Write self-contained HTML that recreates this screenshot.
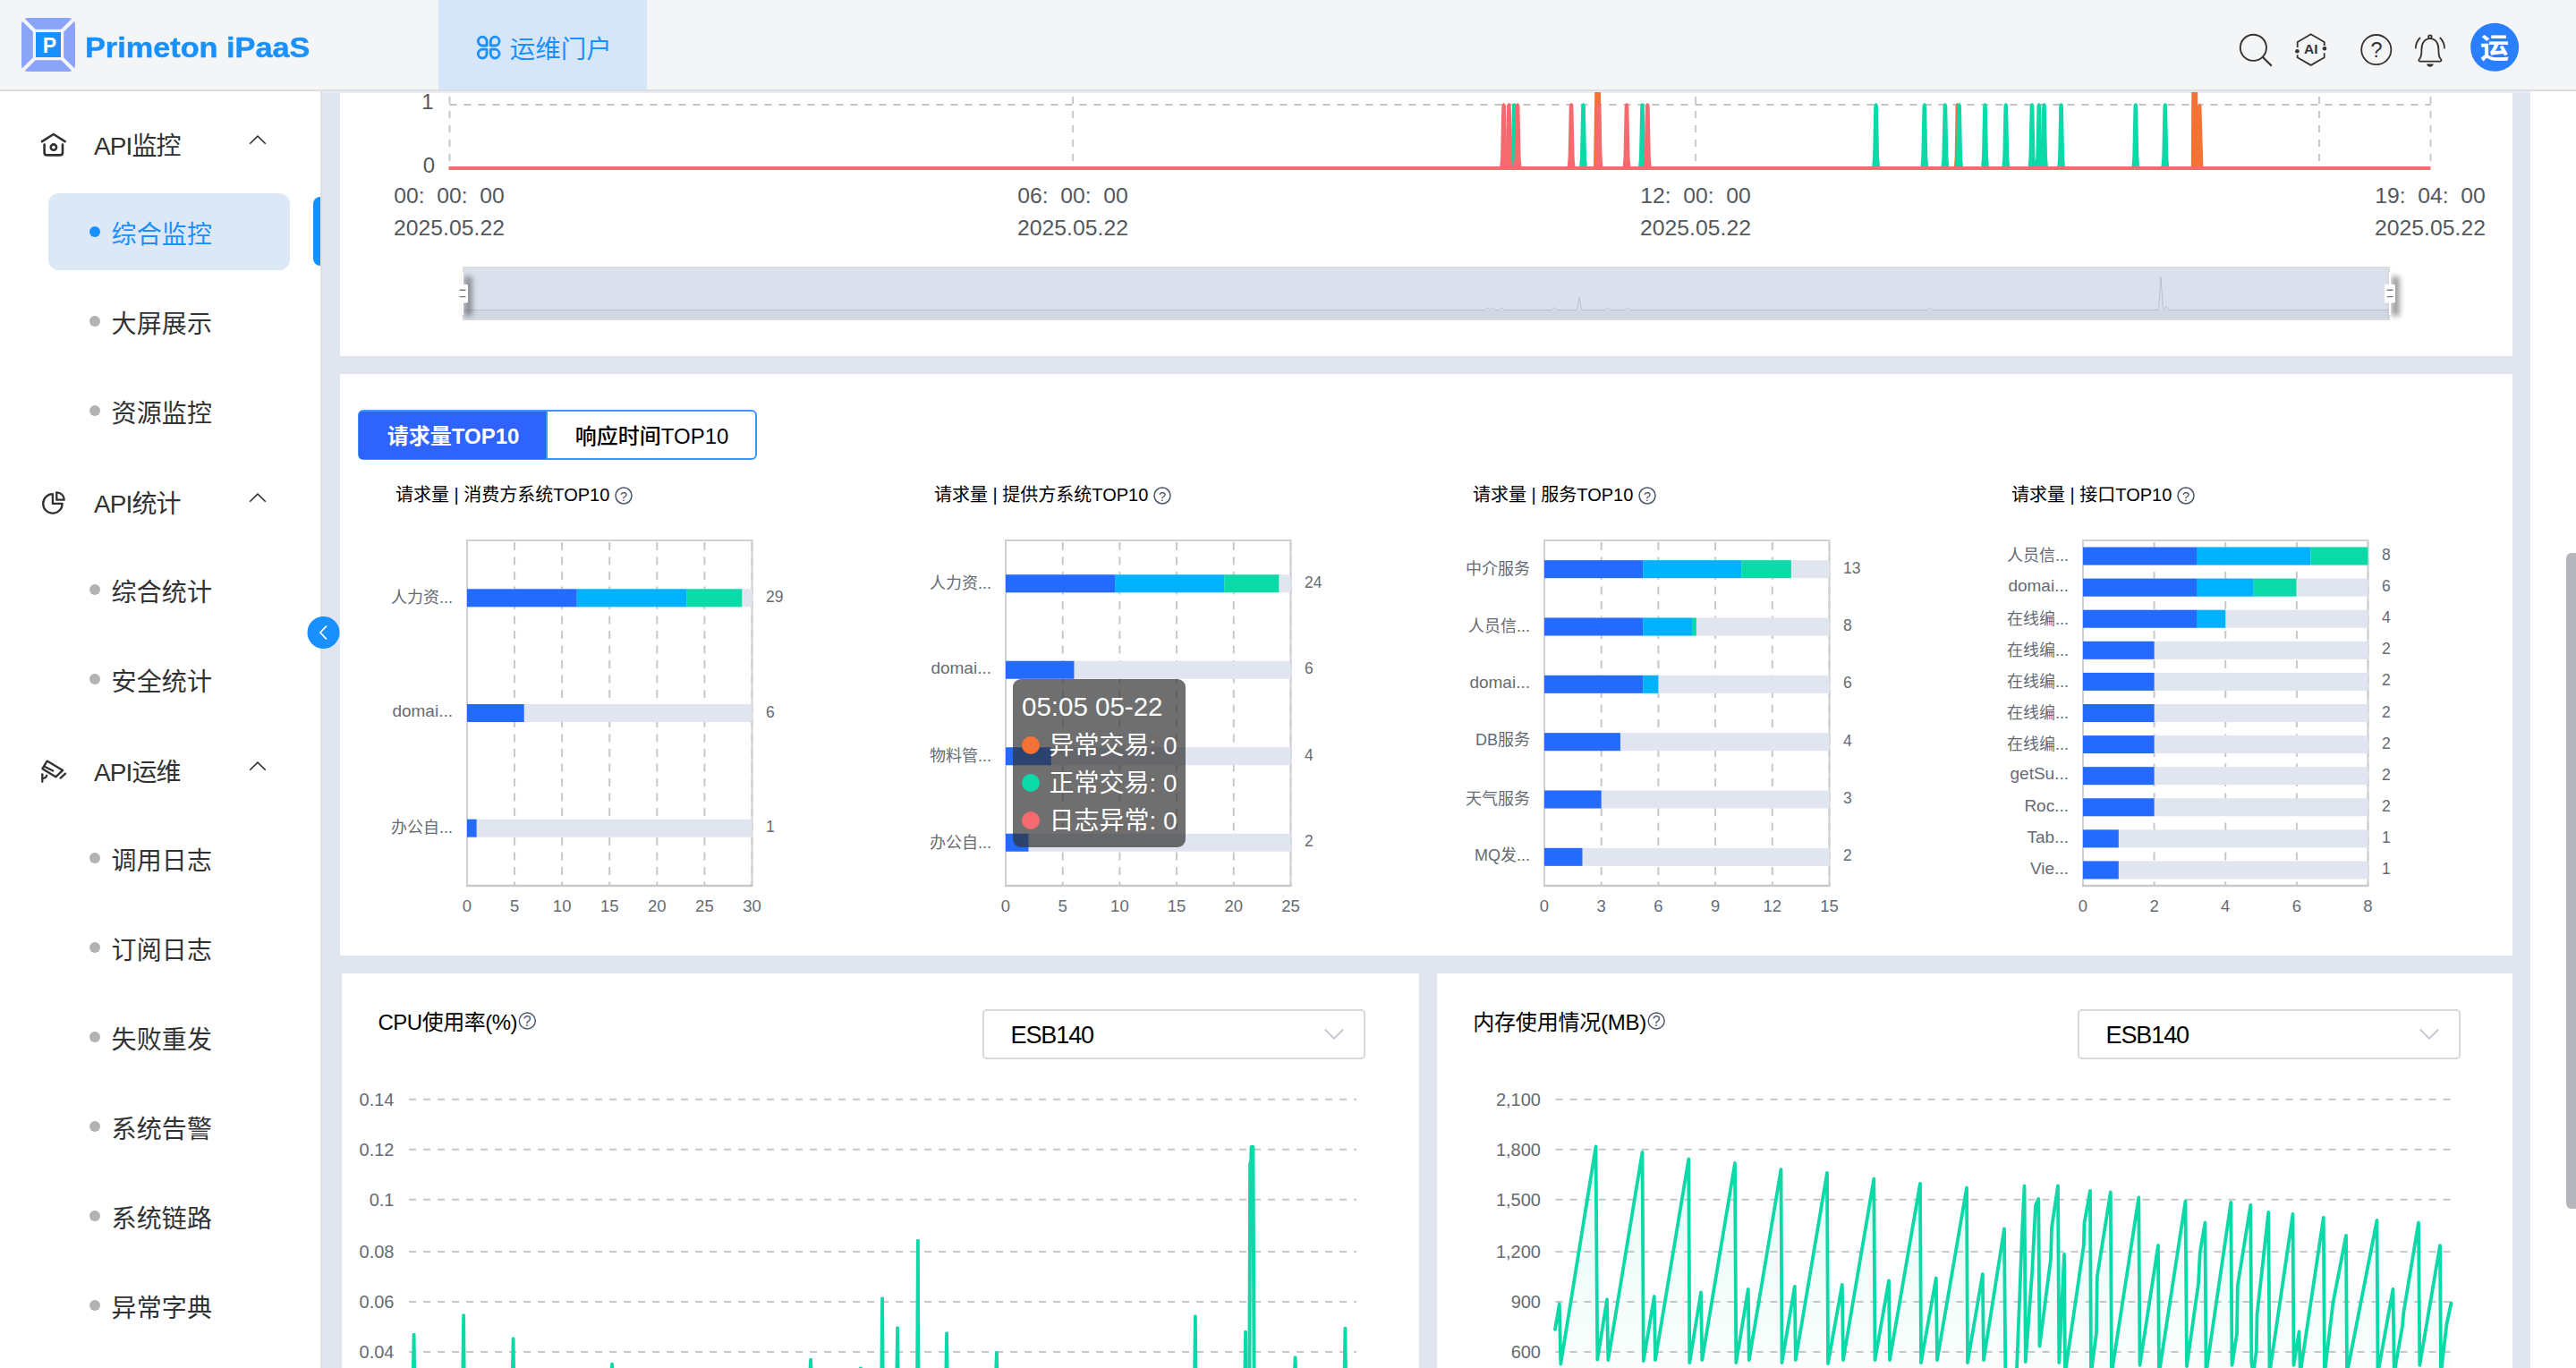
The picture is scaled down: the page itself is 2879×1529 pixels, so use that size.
<!DOCTYPE html>
<html lang="zh-CN">
<head>
<meta charset="utf-8">
<title>Primeton iPaaS - 综合监控</title>
<style>
html,body{margin:0;padding:0;}
body{width:2879px;height:1529px;overflow:hidden;position:relative;background:#fff;font-family:"Liberation Sans", "Noto Sans CJK SC", sans-serif;}
.b{position:absolute;z-index:0;}
.t{position:absolute;white-space:nowrap;z-index:3;}
svg.l{position:absolute;left:0;top:0;pointer-events:none;}
svg.l1{z-index:1;}
svg.l2{z-index:2;}
.tb{z-index:4;}
.tt{z-index:5;}
</style>
</head>
<body>
<div class="app-shell" aria-label="页面框架">
<div class="b" style="left:0px;top:0px;width:2879px;height:1529px;background:#ffffff;"></div>
<div class="b" style="left:358px;top:102px;width:2470px;height:1427px;background:#e1e5ef;"></div>
<div class="b" style="left:358px;top:102px;width:2px;height:1427px;background:#e0e0e1;"></div>
<div class="b" style="left:0px;top:0px;width:2879px;height:100px;background:#f4f5f7;"></div>
<div class="b" style="left:0px;top:100px;width:2879px;height:2px;background:linear-gradient(180deg,#e6e6e7,#d8d8d9 55%,#e2e3e6);"></div>
<div class="b" style="left:360px;top:102px;width:2468px;height:2px;background:#eaedf5;"></div>
<div class="b" style="left:490px;top:0px;width:233px;height:100px;background:#d6e5f7;"></div>
<div class="b" style="left:380px;top:104px;width:2428px;height:294px;background:#fff;"></div>
<div class="b" style="left:380px;top:418px;width:2428px;height:650px;background:#fff;"></div>
<div class="b" style="left:382px;top:1088px;width:1204px;height:441px;background:#fff;"></div>
<div class="b" style="left:1606px;top:1088px;width:1202px;height:441px;background:#fff;"></div>
<div class="b" style="left:2868px;top:618px;width:11px;height:733px;background:#b5b6bb;border-radius:6px 0 0 6px;"></div>
</div>
<header class="app-header" aria-label="顶部导航">
<svg class="l l1" width="2879" height="1529" viewBox="0 0 2879 1529" aria-hidden="true">
<g transform="translate(24,20)">
<rect x="0" y="0" width="60" height="60" rx="7" fill="#8aa4f8"/>
<path d="M-2 -2 L62 62 M62 -2 L-2 62" stroke="#f4f5f7" stroke-width="3.9"/>
<rect x="12.8" y="12.8" width="34.4" height="34.4" fill="#f4f5f7"/>
<rect x="16" y="16" width="28" height="28" fill="#1890ff"/>
</g>
<path d="M539.2,41.2 L539.2,41.2 A4.9,4.9 0 0 1 544.1,46.1 L544.1,50.4 A0.6,0.6 0 0 1 543.5,51.0 L539.2,51.0 A4.9,4.9 0 0 1 534.3000000000001,46.1 L534.3000000000001,46.1 A4.9,4.9 0 0 1 539.2,41.2 Z" fill="none" stroke="#1890ff" stroke-width="2.8"/><path d="M553.2,41.2 L553.2,41.2 A4.9,4.9 0 0 1 558.1,46.1 L558.1,46.1 A4.9,4.9 0 0 1 553.2,51.0 L548.9000000000001,51.0 A0.6,0.6 0 0 1 548.3000000000001,50.4 L548.3000000000001,46.1 A4.9,4.9 0 0 1 553.2,41.2 Z" fill="none" stroke="#1890ff" stroke-width="2.8"/><path d="M539.2,55.2 L543.5,55.2 A0.6,0.6 0 0 1 544.1,55.800000000000004 L544.1,60.1 A4.9,4.9 0 0 1 539.2,65.0 L539.2,65.0 A4.9,4.9 0 0 1 534.3000000000001,60.1 L534.3000000000001,60.1 A4.9,4.9 0 0 1 539.2,55.2 Z" fill="none" stroke="#1890ff" stroke-width="2.8"/><path d="M548.9000000000001,55.2 L553.2,55.2 A4.9,4.9 0 0 1 558.1,60.1 L558.1,60.1 A4.9,4.9 0 0 1 553.2,65.0 L553.2,65.0 A4.9,4.9 0 0 1 548.3000000000001,60.1 L548.3000000000001,55.800000000000004 A0.6,0.6 0 0 1 548.9000000000001,55.2 Z" fill="none" stroke="#1890ff" stroke-width="2.8"/>
<circle cx="2518.4" cy="53.3" r="14.6" fill="none" stroke="#333" stroke-width="1.9"/><path d="M2529 64 L2538.2 73" stroke="#333" stroke-width="2.2" stroke-linecap="round"/>
<path d="M2567.7,53.0 L2567.7,47.0 L2582.7,38.3 L2597.7,47.0 L2597.7,51.0 M2597.7,59.2 L2597.7,64.2 L2582.7,72.9 L2567.7,64.3 L2567.7,61.3" fill="none" stroke="#333" stroke-width="1.8" stroke-linejoin="round"/><circle cx="2567.4" cy="57.2" r="2.3" fill="#333"/><circle cx="2598" cy="54.2" r="2.3" fill="#333"/>
<circle cx="2655.8" cy="55.6" r="16.6" fill="none" stroke="#333" stroke-width="1.8"/>
<g fill="none" stroke="#333" stroke-width="1.8" stroke-linecap="round" stroke-linejoin="round">
<path d="M2704.5,68.6 C2703.5,68.6 2702.8,67.2 2703.8,66.2 C2706.6,63.6 2706.4,60 2706.4,55 C2706.4,48 2710,43.2 2715.9,43.2 C2721.8,43.2 2725.4,48 2725.4,55 C2725.4,60 2725.2,63.6 2728,66.2 C2729,67.2 2728.3,68.6 2727.3,68.6 Z"/>
<circle cx="2715.9" cy="41.2" r="1.8"/>
<path d="M2704.5,42.5 C2701.5,45.5 2700,49.5 2699.8,53.5"/>
<path d="M2727.3,42.5 C2730.3,45.5 2731.8,49.5 2732,53.5"/>
</g><path d="M2712,71.6 L2719.8,71.6 C2719.2,73.8 2717.6,74.8 2715.9,74.8 C2714.2,74.8 2712.6,73.8 2712,71.6 Z" fill="#333"/>
<circle cx="2788.1" cy="52.8" r="27" fill="#2a7fff"/>
</svg>
<div class="t" style="top:35.30px;font-size:23px;line-height:32px;color:#fff;font-weight:700;left:-344.50px;width:800px;text-align:center;">P</div>
<div class="t" style="top:31.60px;font-size:31.3px;line-height:44px;color:#1890ff;font-weight:700;left:95.40px;transform:scaleX(1.095);transform-origin:0 50%;-webkit-text-stroke:0.45px #1890ff;">Primeton iPaaS</div>
<div class="t" style="top:35.00px;font-size:28.5px;line-height:40px;color:#1890ff;left:569.80px;">运维门户</div>
<div class="t" style="top:44.20px;font-size:15.5px;line-height:22px;color:#333;font-weight:700;left:2182.80px;width:800px;text-align:center;">AI</div>
<div class="t" style="top:39.70px;font-size:23.5px;line-height:33px;color:#333;left:2256.00px;width:800px;text-align:center;">?</div>
<div class="t" style="top:32.00px;font-size:32px;line-height:45px;color:#fff;font-weight:700;left:2388.10px;width:800px;text-align:center;">运</div>
</header>
<nav class="app-sidebar" aria-label="侧边菜单">
<div class="b" style="left:54px;top:216px;width:270px;height:86px;background:#dde8f6;border-radius:12px;"></div>
<div class="b" style="left:350px;top:220px;width:8px;height:77px;background:#1890ff;border-radius:8px 0 0 8px;"></div>
<svg class="l l1" width="2879" height="1529" viewBox="0 0 2879 1529" aria-hidden="true">
<path d="M279.2,160.8 L288,152.2 L296.8,160.8" fill="none" stroke="#303133" stroke-width="1.6"/>
<path d="M279.2,560.8 L288,552.2 L296.8,560.8" fill="none" stroke="#303133" stroke-width="1.6"/>
<path d="M279.2,860.8 L288,852.2 L296.8,860.8" fill="none" stroke="#303133" stroke-width="1.6"/>
<g fill="none" stroke="#303133" stroke-width="2.6" stroke-linecap="round" stroke-linejoin="round">
<path d="M47,158.2 L59.8,150 L72.6,158.2"/>
<path d="M49.6,161.5 L49.6,170.4 Q49.6,173.4 52.6,173.4 L67,173.4 Q70,173.4 70,170.4 L70,161.5"/>
<circle cx="59.9" cy="164.6" r="3.2"/></g>
<g fill="none" stroke="#303133" stroke-width="2.3" stroke-linejoin="round">
<path d="M58.9,552.2 A10.7,10.7 0 1 0 69.6,562.9 L58.9,562.9 Z"/>
<path d="M63.3,550.3 L63.3,558.7 L71.7,558.7 A8.4,8.4 0 0 0 63.3,550.3 Z"/></g>
<g fill="none" stroke="#303133" stroke-width="2.3" stroke-linejoin="round" stroke-linecap="round">
<path d="M52.6,850.6 L70.2,860.9 L62.3,868.3 L47.4,859.2 Z"/>
<path d="M50.2,857 L59.2,861.6"/>
<path d="M67.6,869.6 L73,864.6"/>
<path d="M47.3,865.3 L47.3,873.8"/>
<path d="M47.3,870 Q51.6,870 52.2,866.6"/></g>
<circle cx="106" cy="259.0" r="6" fill="#1890ff"/>
<circle cx="106" cy="359.0" r="6" fill="#b2b2b2"/>
<circle cx="106" cy="459.0" r="6" fill="#b2b2b2"/>
<circle cx="106" cy="659.0" r="6" fill="#b2b2b2"/>
<circle cx="106" cy="759.0" r="6" fill="#b2b2b2"/>
<circle cx="106" cy="959.0" r="6" fill="#b2b2b2"/>
<circle cx="106" cy="1059.0" r="6" fill="#b2b2b2"/>
<circle cx="106" cy="1159.0" r="6" fill="#b2b2b2"/>
<circle cx="106" cy="1259.0" r="6" fill="#b2b2b2"/>
<circle cx="106" cy="1359.0" r="6" fill="#b2b2b2"/>
<circle cx="106" cy="1459.0" r="6" fill="#b2b2b2"/>
</svg>
<svg class="l l2" width="2879" height="1529" viewBox="0 0 2879 1529" aria-hidden="true">
<circle cx="361.5" cy="707" r="18" fill="#1890ff"/><path d="M365,699.5 L358,707 L365,714.5" fill="none" stroke="#fff" stroke-width="1.8"/>
</svg>
<div class="t" style="top:143.70px;font-size:28px;line-height:39px;color:#303133;letter-spacing:-0.9px;left:105.00px;">API监控</div>
<div class="t" style="top:543.70px;font-size:28px;line-height:39px;color:#303133;letter-spacing:-0.9px;left:105.00px;">API统计</div>
<div class="t" style="top:843.70px;font-size:28px;line-height:39px;color:#303133;letter-spacing:-0.9px;left:105.00px;">API运维</div>
<div class="t" style="top:243.40px;font-size:28px;line-height:39px;color:#1890ff;letter-spacing:0.15px;left:124.50px;">综合监控</div>
<div class="t" style="top:343.40px;font-size:28px;line-height:39px;color:#303133;letter-spacing:0.15px;left:124.50px;">大屏展示</div>
<div class="t" style="top:443.40px;font-size:28px;line-height:39px;color:#303133;letter-spacing:0.15px;left:124.50px;">资源监控</div>
<div class="t" style="top:643.40px;font-size:28px;line-height:39px;color:#303133;letter-spacing:0.15px;left:124.50px;">综合统计</div>
<div class="t" style="top:743.40px;font-size:28px;line-height:39px;color:#303133;letter-spacing:0.15px;left:124.50px;">安全统计</div>
<div class="t" style="top:943.40px;font-size:28px;line-height:39px;color:#303133;letter-spacing:0.15px;left:124.50px;">调用日志</div>
<div class="t" style="top:1043.40px;font-size:28px;line-height:39px;color:#303133;letter-spacing:0.15px;left:124.50px;">订阅日志</div>
<div class="t" style="top:1143.40px;font-size:28px;line-height:39px;color:#303133;letter-spacing:0.15px;left:124.50px;">失败重发</div>
<div class="t" style="top:1243.40px;font-size:28px;line-height:39px;color:#303133;letter-spacing:0.15px;left:124.50px;">系统告警</div>
<div class="t" style="top:1343.40px;font-size:28px;line-height:39px;color:#303133;letter-spacing:0.15px;left:124.50px;">系统链路</div>
<div class="t" style="top:1443.40px;font-size:28px;line-height:39px;color:#303133;letter-spacing:0.15px;left:124.50px;">异常字典</div>
</nav>
<main class="app-main">
<section class="card card-trend" aria-label="交易趋势">
<svg class="l l1" width="2879" height="1529" viewBox="0 0 2879 1529" aria-hidden="true">
<g stroke="#c4c4c4" stroke-width="1.8" stroke-dasharray="8 8" fill="none"><path d="M502.5,117 L2716.5,117"/><path d="M502.5,108 L502.5,184"/><path d="M1199,108 L1199,184"/><path d="M1895,108 L1895,184"/><path d="M2592,108 L2592,184"/><path d="M2716.5,108 L2716.5,184"/></g>
<path d="M1781,188 L1782.3,103 L1788.9,103 L1790.5,188 Z" fill="#f57235"/><path d="M2183.7000000000003,188 L2184.7000000000003,176 L2185.55,117.6 Q2187.3,112.4 2189.05,117.6 L2189.9,176 L2190.9,188 Z" fill="#f57235"/><path d="M2448.8,188 L2449.3,103 L2456.1,103 L2456.4,118.5 Q2458.9,113 2460.4,118.5 L2462.4,188 Z" fill="#f57235"/><path d="M1687.7,188 L1688.7,176 L1689.9,117.6 Q1692.2,112.4 1694.5,117.6 L1695.7,176 L1696.7,188 Z" fill="#0bd9a7"/><path d="M1765.0,188 L1766.0,176 L1767.2,117.6 Q1769.5,112.4 1771.8,117.6 L1773.0,176 L1774.0,188 Z" fill="#0bd9a7"/><path d="M1831.0,188 L1832.0,176 L1833.2,117.6 Q1835.5,112.4 1837.8,117.6 L1839.0,176 L1840.0,188 Z" fill="#0bd9a7"/><path d="M2092.1,188 L2093.1,176 L2094.2999999999997,117.6 Q2096.6,112.4 2098.9,117.6 L2100.1,176 L2101.1,188 Z" fill="#0bd9a7"/><path d="M2146.3,188 L2147.3,176 L2148.5,117.6 Q2150.8,112.4 2153.1000000000004,117.6 L2154.3,176 L2155.3,188 Z" fill="#0bd9a7"/><path d="M2169.4,188 L2170.4,176 L2171.6,117.6 Q2173.9,112.4 2176.2000000000003,117.6 L2177.4,176 L2178.4,188 Z" fill="#0bd9a7"/><path d="M2185.1,188 L2186.1,176 L2187.2999999999997,117.6 Q2189.6,112.4 2191.9,117.6 L2193.1,176 L2194.1,188 Z" fill="#0bd9a7"/><path d="M2214.0,188 L2215.0,176 L2216.2,117.6 Q2218.5,112.4 2220.8,117.6 L2222.0,176 L2223.0,188 Z" fill="#0bd9a7"/><path d="M2237.3,188 L2238.3,176 L2239.5,117.6 Q2241.8,112.4 2244.1000000000004,117.6 L2245.3,176 L2246.3,188 Z" fill="#0bd9a7"/><path d="M2266.5,188 L2267.5,176 L2268.7,117.6 Q2271,112.4 2273.3,117.6 L2274.5,176 L2275.5,188 Z" fill="#0bd9a7"/><path d="M2274.3,188 L2275.3,176 L2276.5,117.6 Q2278.8,112.4 2281.1000000000004,117.6 L2282.3,176 L2283.3,188 Z" fill="#0bd9a7"/><path d="M2280.0,188 L2281.0,176 L2282.2,117.6 Q2284.5,112.4 2286.8,117.6 L2288.0,176 L2289.0,188 Z" fill="#0bd9a7"/><path d="M2299.1,188 L2300.1,176 L2301.2999999999997,117.6 Q2303.6,112.4 2305.9,117.6 L2307.1,176 L2308.1,188 Z" fill="#0bd9a7"/><path d="M2382.3,188 L2383.3,176 L2384.5,117.6 Q2386.8,112.4 2389.1000000000004,117.6 L2390.3,176 L2391.3,188 Z" fill="#0bd9a7"/><path d="M2415.3,188 L2416.3,176 L2417.5,117.6 Q2419.8,112.4 2422.1000000000004,117.6 L2423.3,176 L2424.3,188 Z" fill="#0bd9a7"/><path d="M1676.1,188 L1677.1,176 L1678.3,117.6 Q1680.6,112.4 1682.8999999999999,117.6 L1684.1,176 L1685.1,188 Z" fill="#f46a6e"/><path d="M1681.9,188 L1682.9,176 L1684.1000000000001,117.6 Q1686.4,112.4 1688.7,117.6 L1689.9,176 L1690.9,188 Z" fill="#f46a6e"/><path d="M1691.6,188 L1692.6,176 L1693.8,117.6 Q1696.1,112.4 1698.3999999999999,117.6 L1699.6,176 L1700.6,188 Z" fill="#f46a6e"/><path d="M1751.6,188 L1752.6,176 L1753.8,117.6 Q1756.1,112.4 1758.3999999999999,117.6 L1759.6,176 L1760.6,188 Z" fill="#f46a6e"/><path d="M1782.5,188 L1783.5,176 L1784.7,117.6 Q1787,112.4 1789.3,117.6 L1790.5,176 L1791.5,188 Z" fill="#f46a6e"/><path d="M1813.5,188 L1814.5,176 L1815.7,117.6 Q1818,112.4 1820.3,117.6 L1821.5,176 L1822.5,188 Z" fill="#f46a6e"/><path d="M1836.8,188 L1837.8,176 L1839.0,117.6 Q1841.3,112.4 1843.6,117.6 L1844.8,176 L1845.8,188 Z" fill="#f46a6e"/>
<path d="M501.5,188 L2716.5,188" stroke="#f46a6e" stroke-width="4"/>
<rect x="517.8" y="298.8" width="2152.4" height="58.4" fill="#dbe1ec" stroke="#dbdbdb" stroke-width="1.6"/><rect x="518.6" y="346.5" width="2150.8" height="9.9" fill="#d1d8e4"/>
<path d="M517,346.5 L1659.5,346.5 L1662,343.5 L1664.5,346.5 L1665.5,346.5 L1668,343.5 L1670.5,346.5 L1675.5,346.5 L1678,343.5 L1680.5,346.5 L1734.5,346.5 L1737,343.5 L1739.5,346.5 L1762.5,346.5 L1765,332.5 L1767.5,346.5 L1794.5,346.5 L1797,343.5 L1799.5,346.5 L1816.5,346.5 L1819,343.5 L1821.5,346.5 L2154.5,346.5 L2157,343.5 L2159.5,346.5 L2412.5,346.5 L2415,309.5 L2417.5,346.5 L2418.5,346.5 L2421,342.5 L2423.5,346.5 L2671,346.5" fill="none" stroke="#b9c1d0" stroke-width="1"/>
<defs><filter id="hs" x="-200%" y="-50%" width="500%" height="200%"><feGaussianBlur stdDeviation="3"/></filter></defs>
<rect x="519" y="309" width="8.5" height="44" fill="#3c3c40" opacity="0.55" filter="url(#hs)"/>
<rect x="518" y="304" width="18" height="50" fill="#6b7280" opacity="0.0"/><path d="M517,304 L517,352" stroke="#fff" stroke-width="2.2"/><rect x="511" y="317.8" width="12" height="20.6" rx="1.5" fill="#fff"/><path d="M513.6,324.2 L520.4,324.2 M513.6,331.6 L520.4,331.6" stroke="#777b85" stroke-width="1.4"/>
<rect x="2673" y="309" width="8.5" height="44" fill="#3c3c40" opacity="0.55" filter="url(#hs)"/>
<rect x="2672" y="304" width="18" height="50" fill="#6b7280" opacity="0.0"/><path d="M2671,304 L2671,352" stroke="#fff" stroke-width="2.2"/><rect x="2665" y="317.8" width="12" height="20.6" rx="1.5" fill="#fff"/><path d="M2667.6,324.2 L2674.4,324.2 M2667.6,331.6 L2674.4,331.6" stroke="#777b85" stroke-width="1.4"/>
</svg>
<div class="t" style="top:97.00px;font-size:24px;line-height:34px;color:#54575c;right:2394.50px;">1</div>
<div class="t" style="top:168.00px;font-size:24px;line-height:34px;color:#54575c;right:2393.00px;">0</div>
<div class="t" style="top:200.80px;font-size:24.75px;line-height:35px;color:#54575c;word-spacing:6.7px;left:102.00px;width:800px;text-align:center;">00: 00: 00</div>
<div class="t" style="top:236.70px;font-size:24.75px;line-height:35px;color:#54575c;left:102.00px;width:800px;text-align:center;">2025.05.22</div>
<div class="t" style="top:200.80px;font-size:24.75px;line-height:35px;color:#54575c;word-spacing:6.7px;left:799.00px;width:800px;text-align:center;">06: 00: 00</div>
<div class="t" style="top:236.70px;font-size:24.75px;line-height:35px;color:#54575c;left:799.00px;width:800px;text-align:center;">2025.05.22</div>
<div class="t" style="top:200.80px;font-size:24.75px;line-height:35px;color:#54575c;word-spacing:6.7px;left:1495.00px;width:800px;text-align:center;">12: 00: 00</div>
<div class="t" style="top:236.70px;font-size:24.75px;line-height:35px;color:#54575c;left:1495.00px;width:800px;text-align:center;">2025.05.22</div>
<div class="t" style="top:200.80px;font-size:24.75px;line-height:35px;color:#54575c;word-spacing:6.7px;left:2316.00px;width:800px;text-align:center;">19: 04: 00</div>
<div class="t" style="top:236.70px;font-size:24.75px;line-height:35px;color:#54575c;left:2316.00px;width:800px;text-align:center;">2025.05.22</div>
</section>
<section class="card card-top10" aria-label="请求量TOP10">
<div class="b" style="left:399.8px;top:458px;width:446px;height:56px;background:#fff;border:2px solid #3a95ff;border-radius:6px;box-sizing:border-box;"></div>
<div class="b" style="left:401.3px;top:459.5px;width:210.2px;height:53px;background:#2e63fe;border-radius:4px 0 0 4px;"></div>
<div class="b" style="left:610px;top:459.5px;width:2px;height:53px;background:#3a95ff;"></div>
<svg class="l l1" width="2879" height="1529" viewBox="0 0 2879 1529" aria-hidden="true">
<circle cx="697" cy="554" r="9" fill="none" stroke="#4b5366" stroke-width="1.5"/>
<g stroke="#c8c8c8" stroke-width="2" stroke-dasharray="9 7.5" fill="none"><path d="M575.08,606 L575.08,990"/><path d="M628.17,606 L628.17,990"/><path d="M681.25,606 L681.25,990"/><path d="M734.33,606 L734.33,990"/><path d="M787.42,606 L787.42,990"/><path d="M840.50,606 L840.50,990"/></g>
<path d="M522,990 L522,604 L840.5,604 L840.5,990" fill="none" stroke="#cfd0d2" stroke-width="2"/><path d="M521,990 L841.5,990" stroke="#c9c9c9" stroke-width="2.5"/>
<rect x="522" y="658.33" width="318.5" height="20" fill="#e1e5ef"/>
<rect x="522.00" y="658.33" width="122.73" height="20" fill="#246bfd"/>
<rect x="644.73" y="658.33" width="122.94" height="20" fill="#00b2fe"/>
<rect x="767.67" y="658.33" width="61.58" height="20" fill="#0bd9a7"/>
<rect x="522" y="787.00" width="318.5" height="20" fill="#e1e5ef"/>
<rect x="522.00" y="787.00" width="63.70" height="20" fill="#246bfd"/>
<rect x="522" y="915.67" width="318.5" height="20" fill="#e1e5ef"/>
<rect x="522.00" y="915.67" width="10.62" height="20" fill="#246bfd"/>
<circle cx="1299" cy="554" r="9" fill="none" stroke="#4b5366" stroke-width="1.5"/>
<g stroke="#c8c8c8" stroke-width="2" stroke-dasharray="9 7.5" fill="none"><path d="M1187.70,606 L1187.70,990"/><path d="M1251.40,606 L1251.40,990"/><path d="M1315.10,606 L1315.10,990"/><path d="M1378.80,606 L1378.80,990"/><path d="M1442.50,606 L1442.50,990"/></g>
<path d="M1124,990 L1124,604 L1442.5,604 L1442.5,990" fill="none" stroke="#cfd0d2" stroke-width="2"/><path d="M1123,990 L1443.5,990" stroke="#c9c9c9" stroke-width="2.5"/>
<rect x="1124" y="642.25" width="318.5" height="20" fill="#e1e5ef"/>
<rect x="1124.00" y="642.25" width="122.05" height="20" fill="#246bfd"/>
<rect x="1246.05" y="642.25" width="122.30" height="20" fill="#00b2fe"/>
<rect x="1368.35" y="642.25" width="61.02" height="20" fill="#0bd9a7"/>
<rect x="1124" y="738.75" width="318.5" height="20" fill="#e1e5ef"/>
<rect x="1124.00" y="738.75" width="76.44" height="20" fill="#246bfd"/>
<rect x="1124" y="835.25" width="318.5" height="20" fill="#e1e5ef"/>
<rect x="1124.00" y="835.25" width="50.96" height="20" fill="#246bfd"/>
<rect x="1124" y="931.75" width="318.5" height="20" fill="#e1e5ef"/>
<rect x="1124.00" y="931.75" width="25.48" height="20" fill="#246bfd"/>
<circle cx="1841" cy="554" r="9" fill="none" stroke="#4b5366" stroke-width="1.5"/>
<g stroke="#c8c8c8" stroke-width="2" stroke-dasharray="9 7.5" fill="none"><path d="M1789.70,606 L1789.70,990"/><path d="M1853.40,606 L1853.40,990"/><path d="M1917.10,606 L1917.10,990"/><path d="M1980.80,606 L1980.80,990"/><path d="M2044.50,606 L2044.50,990"/></g>
<path d="M1726,990 L1726,604 L2044.5,604 L2044.5,990" fill="none" stroke="#cfd0d2" stroke-width="2"/><path d="M1725,990 L2045.5,990" stroke="#c9c9c9" stroke-width="2.5"/>
<rect x="1726" y="626.17" width="318.5" height="20" fill="#e1e5ef"/>
<rect x="1726.00" y="626.17" width="110.20" height="20" fill="#246bfd"/>
<rect x="1836.20" y="626.17" width="109.99" height="20" fill="#00b2fe"/>
<rect x="1946.19" y="626.17" width="55.63" height="20" fill="#0bd9a7"/>
<rect x="1726" y="690.50" width="318.5" height="20" fill="#e1e5ef"/>
<rect x="1726.00" y="690.50" width="110.20" height="20" fill="#246bfd"/>
<rect x="1836.20" y="690.50" width="54.78" height="20" fill="#00b2fe"/>
<rect x="1890.98" y="690.50" width="4.88" height="20" fill="#0bd9a7"/>
<rect x="1726" y="754.83" width="318.5" height="20" fill="#e1e5ef"/>
<rect x="1726.00" y="754.83" width="110.20" height="20" fill="#246bfd"/>
<rect x="1836.20" y="754.83" width="17.20" height="20" fill="#00b2fe"/>
<rect x="1726" y="819.17" width="318.5" height="20" fill="#e1e5ef"/>
<rect x="1726.00" y="819.17" width="84.93" height="20" fill="#246bfd"/>
<rect x="1726" y="883.50" width="318.5" height="20" fill="#e1e5ef"/>
<rect x="1726.00" y="883.50" width="63.70" height="20" fill="#246bfd"/>
<rect x="1726" y="947.83" width="318.5" height="20" fill="#e1e5ef"/>
<rect x="1726.00" y="947.83" width="42.47" height="20" fill="#246bfd"/>
<circle cx="2443" cy="554" r="9" fill="none" stroke="#4b5366" stroke-width="1.5"/>
<g stroke="#c8c8c8" stroke-width="2" stroke-dasharray="9 7.5" fill="none"><path d="M2407.62,606 L2407.62,990"/><path d="M2487.25,606 L2487.25,990"/><path d="M2566.88,606 L2566.88,990"/><path d="M2646.50,606 L2646.50,990"/></g>
<path d="M2328,990 L2328,604 L2646.5,604 L2646.5,990" fill="none" stroke="#cfd0d2" stroke-width="2"/><path d="M2327,990 L2647.5,990" stroke="#c9c9c9" stroke-width="2.5"/>
<rect x="2328" y="611.55" width="318.5" height="20" fill="#e1e5ef"/>
<rect x="2328.00" y="611.55" width="127.00" height="20" fill="#246bfd"/>
<rect x="2455.00" y="611.55" width="127.40" height="20" fill="#00b2fe"/>
<rect x="2582.40" y="611.55" width="64.10" height="20" fill="#0bd9a7"/>
<rect x="2328" y="646.64" width="318.5" height="20" fill="#e1e5ef"/>
<rect x="2328.00" y="646.64" width="127.00" height="20" fill="#246bfd"/>
<rect x="2455.00" y="646.64" width="63.70" height="20" fill="#00b2fe"/>
<rect x="2518.70" y="646.64" width="47.77" height="20" fill="#0bd9a7"/>
<rect x="2328" y="681.73" width="318.5" height="20" fill="#e1e5ef"/>
<rect x="2328.00" y="681.73" width="127.00" height="20" fill="#246bfd"/>
<rect x="2455.00" y="681.73" width="32.25" height="20" fill="#00b2fe"/>
<rect x="2328" y="716.82" width="318.5" height="20" fill="#e1e5ef"/>
<rect x="2328.00" y="716.82" width="79.62" height="20" fill="#246bfd"/>
<rect x="2328" y="751.91" width="318.5" height="20" fill="#e1e5ef"/>
<rect x="2328.00" y="751.91" width="79.62" height="20" fill="#246bfd"/>
<rect x="2328" y="787.00" width="318.5" height="20" fill="#e1e5ef"/>
<rect x="2328.00" y="787.00" width="79.62" height="20" fill="#246bfd"/>
<rect x="2328" y="822.09" width="318.5" height="20" fill="#e1e5ef"/>
<rect x="2328.00" y="822.09" width="79.62" height="20" fill="#246bfd"/>
<rect x="2328" y="857.18" width="318.5" height="20" fill="#e1e5ef"/>
<rect x="2328.00" y="857.18" width="79.62" height="20" fill="#246bfd"/>
<rect x="2328" y="892.27" width="318.5" height="20" fill="#e1e5ef"/>
<rect x="2328.00" y="892.27" width="79.62" height="20" fill="#246bfd"/>
<rect x="2328" y="927.36" width="318.5" height="20" fill="#e1e5ef"/>
<rect x="2328.00" y="927.36" width="39.81" height="20" fill="#246bfd"/>
<rect x="2328" y="962.45" width="318.5" height="20" fill="#e1e5ef"/>
<rect x="2328.00" y="962.45" width="39.81" height="20" fill="#246bfd"/>
</svg>
<div class="t" style="top:471.20px;font-size:24px;line-height:34px;color:#fff;font-weight:700;left:106.60px;width:800px;text-align:center;">请求量TOP10</div>
<div class="t" style="top:471.20px;font-size:24px;line-height:34px;color:#000;font-weight:500;left:328.60px;width:800px;text-align:center;">响应时间TOP10</div>
<div class="t" style="top:538.80px;font-size:20px;line-height:28px;color:#000;left:442.00px;">请求量 | 消费方系统TOP10</div>
<div class="t" style="top:544.60px;font-size:14.5px;line-height:20px;color:#4b5366;left:297.00px;width:800px;text-align:center;">?</div>
<div class="t" style="top:656.13px;font-size:18px;line-height:25px;color:#666b73;right:2373.00px;">人力资...</div>
<div class="t" style="top:654.83px;font-size:17.5px;line-height:24px;color:#666b73;left:856.00px;">29</div>
<div class="t" style="top:781.30px;font-size:19px;line-height:27px;color:#666b73;right:2373.00px;">domai...</div>
<div class="t" style="top:783.50px;font-size:17.5px;line-height:24px;color:#666b73;left:856.00px;">6</div>
<div class="t" style="top:913.47px;font-size:18px;line-height:25px;color:#666b73;right:2373.00px;">办公自...</div>
<div class="t" style="top:912.17px;font-size:17.5px;line-height:24px;color:#666b73;left:856.00px;">1</div>
<div class="t" style="top:999.80px;font-size:18.5px;line-height:26px;color:#666b73;left:122.00px;width:800px;text-align:center;">0</div>
<div class="t" style="top:999.80px;font-size:18.5px;line-height:26px;color:#666b73;left:175.08px;width:800px;text-align:center;">5</div>
<div class="t" style="top:999.80px;font-size:18.5px;line-height:26px;color:#666b73;left:228.17px;width:800px;text-align:center;">10</div>
<div class="t" style="top:999.80px;font-size:18.5px;line-height:26px;color:#666b73;left:281.25px;width:800px;text-align:center;">15</div>
<div class="t" style="top:999.80px;font-size:18.5px;line-height:26px;color:#666b73;left:334.33px;width:800px;text-align:center;">20</div>
<div class="t" style="top:999.80px;font-size:18.5px;line-height:26px;color:#666b73;left:387.42px;width:800px;text-align:center;">25</div>
<div class="t" style="top:999.80px;font-size:18.5px;line-height:26px;color:#666b73;left:440.50px;width:800px;text-align:center;">30</div>
<div class="t" style="top:538.80px;font-size:20px;line-height:28px;color:#000;left:1044.00px;">请求量 | 提供方系统TOP10</div>
<div class="t" style="top:544.60px;font-size:14.5px;line-height:20px;color:#4b5366;left:899.00px;width:800px;text-align:center;">?</div>
<div class="t" style="top:640.05px;font-size:18px;line-height:25px;color:#666b73;right:1771.00px;">人力资...</div>
<div class="t" style="top:638.75px;font-size:17.5px;line-height:24px;color:#666b73;left:1458.00px;">24</div>
<div class="t" style="top:733.05px;font-size:19px;line-height:27px;color:#666b73;right:1771.00px;">domai...</div>
<div class="t" style="top:735.25px;font-size:17.5px;line-height:24px;color:#666b73;left:1458.00px;">6</div>
<div class="t" style="top:833.05px;font-size:18px;line-height:25px;color:#666b73;right:1771.00px;">物料管...</div>
<div class="t" style="top:831.75px;font-size:17.5px;line-height:24px;color:#666b73;left:1458.00px;">4</div>
<div class="t" style="top:929.55px;font-size:18px;line-height:25px;color:#666b73;right:1771.00px;">办公自...</div>
<div class="t" style="top:928.25px;font-size:17.5px;line-height:24px;color:#666b73;left:1458.00px;">2</div>
<div class="t" style="top:999.80px;font-size:18.5px;line-height:26px;color:#666b73;left:724.00px;width:800px;text-align:center;">0</div>
<div class="t" style="top:999.80px;font-size:18.5px;line-height:26px;color:#666b73;left:787.70px;width:800px;text-align:center;">5</div>
<div class="t" style="top:999.80px;font-size:18.5px;line-height:26px;color:#666b73;left:851.40px;width:800px;text-align:center;">10</div>
<div class="t" style="top:999.80px;font-size:18.5px;line-height:26px;color:#666b73;left:915.10px;width:800px;text-align:center;">15</div>
<div class="t" style="top:999.80px;font-size:18.5px;line-height:26px;color:#666b73;left:978.80px;width:800px;text-align:center;">20</div>
<div class="t" style="top:999.80px;font-size:18.5px;line-height:26px;color:#666b73;left:1042.50px;width:800px;text-align:center;">25</div>
<div class="t" style="top:538.80px;font-size:20px;line-height:28px;color:#000;left:1646.00px;">请求量 | 服务TOP10</div>
<div class="t" style="top:544.60px;font-size:14.5px;line-height:20px;color:#4b5366;left:1441.00px;width:800px;text-align:center;">?</div>
<div class="t" style="top:623.97px;font-size:18px;line-height:25px;color:#666b73;right:1169.00px;">中介服务</div>
<div class="t" style="top:622.67px;font-size:17.5px;line-height:24px;color:#666b73;left:2060.00px;">13</div>
<div class="t" style="top:688.30px;font-size:18px;line-height:25px;color:#666b73;right:1169.00px;">人员信...</div>
<div class="t" style="top:687.00px;font-size:17.5px;line-height:24px;color:#666b73;left:2060.00px;">8</div>
<div class="t" style="top:749.13px;font-size:19px;line-height:27px;color:#666b73;right:1169.00px;">domai...</div>
<div class="t" style="top:751.33px;font-size:17.5px;line-height:24px;color:#666b73;left:2060.00px;">6</div>
<div class="t" style="top:815.47px;font-size:18px;line-height:25px;color:#666b73;right:1169.00px;">DB服务</div>
<div class="t" style="top:815.67px;font-size:17.5px;line-height:24px;color:#666b73;left:2060.00px;">4</div>
<div class="t" style="top:881.30px;font-size:18px;line-height:25px;color:#666b73;right:1169.00px;">天气服务</div>
<div class="t" style="top:880.00px;font-size:17.5px;line-height:24px;color:#666b73;left:2060.00px;">3</div>
<div class="t" style="top:944.13px;font-size:18px;line-height:25px;color:#666b73;right:1169.00px;">MQ发...</div>
<div class="t" style="top:944.33px;font-size:17.5px;line-height:24px;color:#666b73;left:2060.00px;">2</div>
<div class="t" style="top:999.80px;font-size:18.5px;line-height:26px;color:#666b73;left:1326.00px;width:800px;text-align:center;">0</div>
<div class="t" style="top:999.80px;font-size:18.5px;line-height:26px;color:#666b73;left:1389.70px;width:800px;text-align:center;">3</div>
<div class="t" style="top:999.80px;font-size:18.5px;line-height:26px;color:#666b73;left:1453.40px;width:800px;text-align:center;">6</div>
<div class="t" style="top:999.80px;font-size:18.5px;line-height:26px;color:#666b73;left:1517.10px;width:800px;text-align:center;">9</div>
<div class="t" style="top:999.80px;font-size:18.5px;line-height:26px;color:#666b73;left:1580.80px;width:800px;text-align:center;">12</div>
<div class="t" style="top:999.80px;font-size:18.5px;line-height:26px;color:#666b73;left:1644.50px;width:800px;text-align:center;">15</div>
<div class="t" style="top:538.80px;font-size:20px;line-height:28px;color:#000;left:2248.00px;">请求量 | 接口TOP10</div>
<div class="t" style="top:544.60px;font-size:14.5px;line-height:20px;color:#4b5366;left:2043.00px;width:800px;text-align:center;">?</div>
<div class="t" style="top:609.35px;font-size:18px;line-height:25px;color:#666b73;right:567.00px;">人员信...</div>
<div class="t" style="top:608.05px;font-size:17.5px;line-height:24px;color:#666b73;left:2662.00px;">8</div>
<div class="t" style="top:640.94px;font-size:19px;line-height:27px;color:#666b73;right:567.00px;">domai...</div>
<div class="t" style="top:643.14px;font-size:17.5px;line-height:24px;color:#666b73;left:2662.00px;">6</div>
<div class="t" style="top:679.53px;font-size:18px;line-height:25px;color:#666b73;right:567.00px;">在线编...</div>
<div class="t" style="top:678.23px;font-size:17.5px;line-height:24px;color:#666b73;left:2662.00px;">4</div>
<div class="t" style="top:714.62px;font-size:18px;line-height:25px;color:#666b73;right:567.00px;">在线编...</div>
<div class="t" style="top:713.32px;font-size:17.5px;line-height:24px;color:#666b73;left:2662.00px;">2</div>
<div class="t" style="top:749.71px;font-size:18px;line-height:25px;color:#666b73;right:567.00px;">在线编...</div>
<div class="t" style="top:748.41px;font-size:17.5px;line-height:24px;color:#666b73;left:2662.00px;">2</div>
<div class="t" style="top:784.80px;font-size:18px;line-height:25px;color:#666b73;right:567.00px;">在线编...</div>
<div class="t" style="top:783.50px;font-size:17.5px;line-height:24px;color:#666b73;left:2662.00px;">2</div>
<div class="t" style="top:819.89px;font-size:18px;line-height:25px;color:#666b73;right:567.00px;">在线编...</div>
<div class="t" style="top:818.59px;font-size:17.5px;line-height:24px;color:#666b73;left:2662.00px;">2</div>
<div class="t" style="top:851.48px;font-size:19px;line-height:27px;color:#666b73;right:567.00px;">getSu...</div>
<div class="t" style="top:853.68px;font-size:17.5px;line-height:24px;color:#666b73;left:2662.00px;">2</div>
<div class="t" style="top:886.57px;font-size:19px;line-height:27px;color:#666b73;right:567.00px;">Roc...</div>
<div class="t" style="top:888.77px;font-size:17.5px;line-height:24px;color:#666b73;left:2662.00px;">2</div>
<div class="t" style="top:921.66px;font-size:19px;line-height:27px;color:#666b73;right:567.00px;">Tab...</div>
<div class="t" style="top:923.86px;font-size:17.5px;line-height:24px;color:#666b73;left:2662.00px;">1</div>
<div class="t" style="top:956.75px;font-size:19px;line-height:27px;color:#666b73;right:567.00px;">Vie...</div>
<div class="t" style="top:958.95px;font-size:17.5px;line-height:24px;color:#666b73;left:2662.00px;">1</div>
<div class="t" style="top:999.80px;font-size:18.5px;line-height:26px;color:#666b73;left:1928.00px;width:800px;text-align:center;">0</div>
<div class="t" style="top:999.80px;font-size:18.5px;line-height:26px;color:#666b73;left:2007.62px;width:800px;text-align:center;">2</div>
<div class="t" style="top:999.80px;font-size:18.5px;line-height:26px;color:#666b73;left:2087.25px;width:800px;text-align:center;">4</div>
<div class="t" style="top:999.80px;font-size:18.5px;line-height:26px;color:#666b73;left:2166.88px;width:800px;text-align:center;">6</div>
<div class="t" style="top:999.80px;font-size:18.5px;line-height:26px;color:#666b73;left:2246.50px;width:800px;text-align:center;">8</div>
</section>
<section class="card card-cpu" aria-label="CPU使用率">
<div class="b" style="left:1097.5px;top:1128.1px;width:428.0px;height:56px;border:2px solid #d6d9de;border-radius:5px;box-sizing:border-box;background:#fff;"></div>
<svg class="l l1" width="2879" height="1529" viewBox="0 0 2879 1529" aria-hidden="true">
<circle cx="589.3" cy="1141" r="9" fill="none" stroke="#4b5366" stroke-width="1.4"/>
<g stroke="#c7c7c7" stroke-width="1.8" stroke-dasharray="8 8" fill="none"><path d="M457,1228.75 L1516,1228.75"/><path d="M457,1284.75 L1516,1284.75"/><path d="M457,1340.75 L1516,1340.75"/><path d="M457,1399 L1516,1399"/><path d="M457,1455 L1516,1455"/><path d="M457,1511 L1516,1511"/></g>
</svg>
<svg class="l l2" width="2879" height="1529" viewBox="0 0 2879 1529" aria-hidden="true">
<path d="M1480.8,1150.6 L1491.0,1160.8 L1501.2,1150.6" fill="none" stroke="#bfc3cc" stroke-width="1.7"/>
<path d="M461.3,1535 L462.1,1491.5 L463.1,1491.5 L463.7,1535 M516.8,1535 L517.6,1470 L518.6,1470 L519.2,1535 M572.3,1535 L573.1,1496 L574.1,1496 L574.7,1535 M682.8,1535 L683.6,1524.5 L684.6,1524.5 L685.2,1535 M904.8,1535 L905.6,1519.5 L906.6,1519.5 L907.2,1535 M960.5999999999999,1535 L961.4,1529 L962.4,1529 L963.0,1535 M984.8,1535 L985.6,1450.8 L986.6,1450.8 L987.2,1535 M1001.8,1535 L1002.6,1484 L1003.6,1484 L1004.2,1535 M1024.6,1535 L1025.3999999999999,1386.5 L1026.3999999999999,1386.5 L1027.0,1535 M1056.8,1535 L1057.6,1489.8 L1058.6,1489.8 L1059.2,1535 M1112.6,1535 L1113.3999999999999,1511.5 L1114.3999999999999,1511.5 L1115.0,1535 M1334.6,1535 L1335.3999999999999,1471 L1336.3999999999999,1471 L1337.0,1535 M1390.8,1535 L1391.6,1488.5 L1392.6,1488.5 L1393.2,1535 M1446.3,1535 L1447.1,1517 L1448.1,1517 L1448.7,1535 M1502.1,1535 L1502.8999999999999,1484.5 L1503.8999999999999,1484.5 L1504.5,1535 " fill="none" stroke="#0bd9a7" stroke-width="2.8" stroke-linejoin="round" stroke-linecap="round"/>
<path d="M1396.4,1535 L1397.2,1300 L1398.2,1300 L1398.6,1282 L1400.4,1282 L1401.6,1535" fill="none" stroke="#0bd9a7" stroke-width="4" stroke-linejoin="round" stroke-linecap="round"/>
</svg>
<div class="t" style="top:1125.50px;font-size:24px;line-height:34px;color:#000;letter-spacing:-0.5px;left:422.50px;">CPU使用率(%)</div>
<div class="t" style="top:1130.60px;font-size:16px;line-height:22px;color:#4b5366;left:189.30px;width:800px;text-align:center;">?</div>
<div class="t" style="top:1138.20px;font-size:27px;line-height:38px;color:#000;letter-spacing:-1.1px;left:1129.50px;">ESB140</div>
<div class="t" style="top:1215.05px;font-size:20px;line-height:28px;color:#666b73;right:2438.50px;">0.14</div>
<div class="t" style="top:1271.05px;font-size:20px;line-height:28px;color:#666b73;right:2438.50px;">0.12</div>
<div class="t" style="top:1327.05px;font-size:20px;line-height:28px;color:#666b73;right:2438.50px;">0.1</div>
<div class="t" style="top:1385.30px;font-size:20px;line-height:28px;color:#666b73;right:2438.50px;">0.08</div>
<div class="t" style="top:1441.30px;font-size:20px;line-height:28px;color:#666b73;right:2438.50px;">0.06</div>
<div class="t" style="top:1497.30px;font-size:20px;line-height:28px;color:#666b73;right:2438.50px;">0.04</div>
</section>
<section class="card card-mem" aria-label="内存使用情况">
<div class="b" style="left:2321.5px;top:1128.1px;width:428.0px;height:56px;border:2px solid #d6d9de;border-radius:5px;box-sizing:border-box;background:#fff;"></div>
<svg class="l l1" width="2879" height="1529" viewBox="0 0 2879 1529" aria-hidden="true">
<circle cx="1851.2" cy="1141" r="9" fill="none" stroke="#4b5366" stroke-width="1.4"/>
<g stroke="#c7c7c7" stroke-width="1.8" stroke-dasharray="8 8" fill="none"><path d="M1738.5,1228.75 L2739,1228.75"/><path d="M1738.5,1284.75 L2739,1284.75"/><path d="M1738.5,1340.75 L2739,1340.75"/><path d="M1738.5,1399 L2739,1399"/><path d="M1738.5,1455 L2739,1455"/><path d="M1738.5,1511 L2739,1511"/></g>
</svg>
<svg class="l l2" width="2879" height="1529" viewBox="0 0 2879 1529" aria-hidden="true">
<path d="M2704.8,1150.6 L2715.0,1160.8 L2725.2,1150.6" fill="none" stroke="#bfc3cc" stroke-width="1.7"/>
<defs><linearGradient id="mg" x1="0" y1="0" x2="0" y2="1"><stop offset="0" stop-color="#0bd9a7" stop-opacity="0.10"/><stop offset="1" stop-color="#0bd9a7" stop-opacity="0.02"/></linearGradient></defs>
<path d="M1738,1485.8 L1742.8,1457.5 L1744.3,1524.5 L1783.5,1281.5 L1785.3,1519.5 L1796,1452.5 L1797.3,1520 L1835.5,1287.8 L1836.8,1521 L1848.8,1449 L1850,1520 L1887.3,1295.3 L1888.3,1523 L1901,1444.5 L1902.3,1520 L1939,1300 L1940.3,1523 L1953.8,1441 L1954.8,1520 L1990.5,1307 L1991.5,1523 L2005.8,1437.8 L2006.8,1520 L2042,1310.8 L2043,1524 L2058.8,1435.8 L2060,1520 L2094.3,1317.5 L2095.5,1520 L2111,1431.3 L2112,1520 L2146,1322.8 L2147,1523 L2163.8,1428.5 L2165,1520 L2198,1327.5 L2199,1523 L2215.8,1424 L2217,1520 L2240,1373.3 L2241.3,1535 L2253.8,1535 L2260,1377 L2262.5,1325.3 L2263.8,1522 L2271.3,1419.5 L2275,1347 L2278.3,1340 L2279.5,1504.5 L2292,1407 L2293,1372 L2300,1325.3 L2301.3,1523 L2307,1402 L2308,1535 L2328.8,1392 L2329.5,1367 L2336,1330.8 L2337,1535 L2343,1489.5 L2343.8,1427 L2358.8,1332.5 L2360,1535 L2390.3,1338.3 L2391.5,1525.8 L2412,1392 L2413,1535 L2442.5,1342.5 L2444,1527 L2457,1434.5 L2458.8,1399.5 L2464.5,1366.5 L2465.5,1535 L2493.3,1344 L2494.5,1525.8 L2500,1490.8 L2500.8,1437 L2515.3,1347 L2516.3,1523.3 L2518.3,1535 L2521.8,1509.5 L2522.5,1469.5 L2535.3,1355 L2536.5,1535 L2562.5,1357 L2563.5,1525.8 L2569.5,1488.3 L2570.8,1535 L2596.8,1360.8 L2598,1535 L2607.5,1455.8 L2622,1380.8 L2623,1535 L2656.5,1363.8 L2657.5,1535 L2674.5,1440.8 L2675.8,1535 L2685,1482 L2686.3,1467 L2703,1366.5 L2704.3,1525.8 L2727,1392 L2728,1535 L2734.5,1479.5 L2739.5,1456.5 L2739.5,1535 L1738,1535 Z" fill="url(#mg)" stroke="none"/>
<path d="M1738,1485.8 L1742.8,1457.5 L1744.3,1524.5 L1783.5,1281.5 L1785.3,1519.5 L1796,1452.5 L1797.3,1520 L1835.5,1287.8 L1836.8,1521 L1848.8,1449 L1850,1520 L1887.3,1295.3 L1888.3,1523 L1901,1444.5 L1902.3,1520 L1939,1300 L1940.3,1523 L1953.8,1441 L1954.8,1520 L1990.5,1307 L1991.5,1523 L2005.8,1437.8 L2006.8,1520 L2042,1310.8 L2043,1524 L2058.8,1435.8 L2060,1520 L2094.3,1317.5 L2095.5,1520 L2111,1431.3 L2112,1520 L2146,1322.8 L2147,1523 L2163.8,1428.5 L2165,1520 L2198,1327.5 L2199,1523 L2215.8,1424 L2217,1520 L2240,1373.3 L2241.3,1535 L2253.8,1535 L2260,1377 L2262.5,1325.3 L2263.8,1522 L2271.3,1419.5 L2275,1347 L2278.3,1340 L2279.5,1504.5 L2292,1407 L2293,1372 L2300,1325.3 L2301.3,1523 L2307,1402 L2308,1535 L2328.8,1392 L2329.5,1367 L2336,1330.8 L2337,1535 L2343,1489.5 L2343.8,1427 L2358.8,1332.5 L2360,1535 L2390.3,1338.3 L2391.5,1525.8 L2412,1392 L2413,1535 L2442.5,1342.5 L2444,1527 L2457,1434.5 L2458.8,1399.5 L2464.5,1366.5 L2465.5,1535 L2493.3,1344 L2494.5,1525.8 L2500,1490.8 L2500.8,1437 L2515.3,1347 L2516.3,1523.3 L2518.3,1535 L2521.8,1509.5 L2522.5,1469.5 L2535.3,1355 L2536.5,1535 L2562.5,1357 L2563.5,1525.8 L2569.5,1488.3 L2570.8,1535 L2596.8,1360.8 L2598,1535 L2607.5,1455.8 L2622,1380.8 L2623,1535 L2656.5,1363.8 L2657.5,1535 L2674.5,1440.8 L2675.8,1535 L2685,1482 L2686.3,1467 L2703,1366.5 L2704.3,1525.8 L2727,1392 L2728,1535 L2734.5,1479.5 L2739.5,1456.5" fill="none" stroke="#0bd9a7" stroke-width="3.8" stroke-linejoin="round" stroke-linecap="round"/>
</svg>
<div class="t" style="top:1125.50px;font-size:24px;line-height:34px;color:#000;letter-spacing:-0.22px;left:1646.30px;">内存使用情况(MB)</div>
<div class="t" style="top:1130.60px;font-size:16px;line-height:22px;color:#4b5366;left:1451.20px;width:800px;text-align:center;">?</div>
<div class="t" style="top:1138.20px;font-size:27px;line-height:38px;color:#000;letter-spacing:-1.1px;left:2353.50px;">ESB140</div>
<div class="t" style="top:1215.05px;font-size:20px;line-height:28px;color:#666b73;right:1157.00px;">2,100</div>
<div class="t" style="top:1271.05px;font-size:20px;line-height:28px;color:#666b73;right:1157.00px;">1,800</div>
<div class="t" style="top:1327.05px;font-size:20px;line-height:28px;color:#666b73;right:1157.00px;">1,500</div>
<div class="t" style="top:1385.30px;font-size:20px;line-height:28px;color:#666b73;right:1157.00px;">1,200</div>
<div class="t" style="top:1441.30px;font-size:20px;line-height:28px;color:#666b73;right:1157.00px;">900</div>
<div class="t" style="top:1497.30px;font-size:20px;line-height:28px;color:#666b73;right:1157.00px;">600</div>
</section>
<div class="chart-tooltip" role="tooltip">
<div class="b tb" style="left:1132px;top:759.3px;width:193px;height:187.7px;background:rgba(50,50,50,0.7);border-radius:9px;"></div>
<div class="b tt" style="left:1142px;top:822.5px;width:20px;height:20px;border-radius:50%;background:#f57235;"></div>
<div class="b tt" style="left:1142px;top:864.5px;width:20px;height:20px;border-radius:50%;background:#0bd9a7;"></div>
<div class="b tt" style="left:1142px;top:907px;width:20px;height:20px;border-radius:50%;background:#f46a6e;"></div>
<div class="t tt" style="left:1142px;top:769.00px;font-size:29.5px;line-height:42px;color:#fff;">05:05 05-22</div>
<div class="t tt" style="left:1172.5px;top:812.50px;font-size:28px;line-height:42px;color:#fff;">异常交易: 0</div>
<div class="t tt" style="left:1172.5px;top:854.50px;font-size:28px;line-height:42px;color:#fff;">正常交易: 0</div>
<div class="t tt" style="left:1172.5px;top:897.00px;font-size:28px;line-height:42px;color:#fff;">日志异常: 0</div>
</div>
</main>
</body>
</html>
